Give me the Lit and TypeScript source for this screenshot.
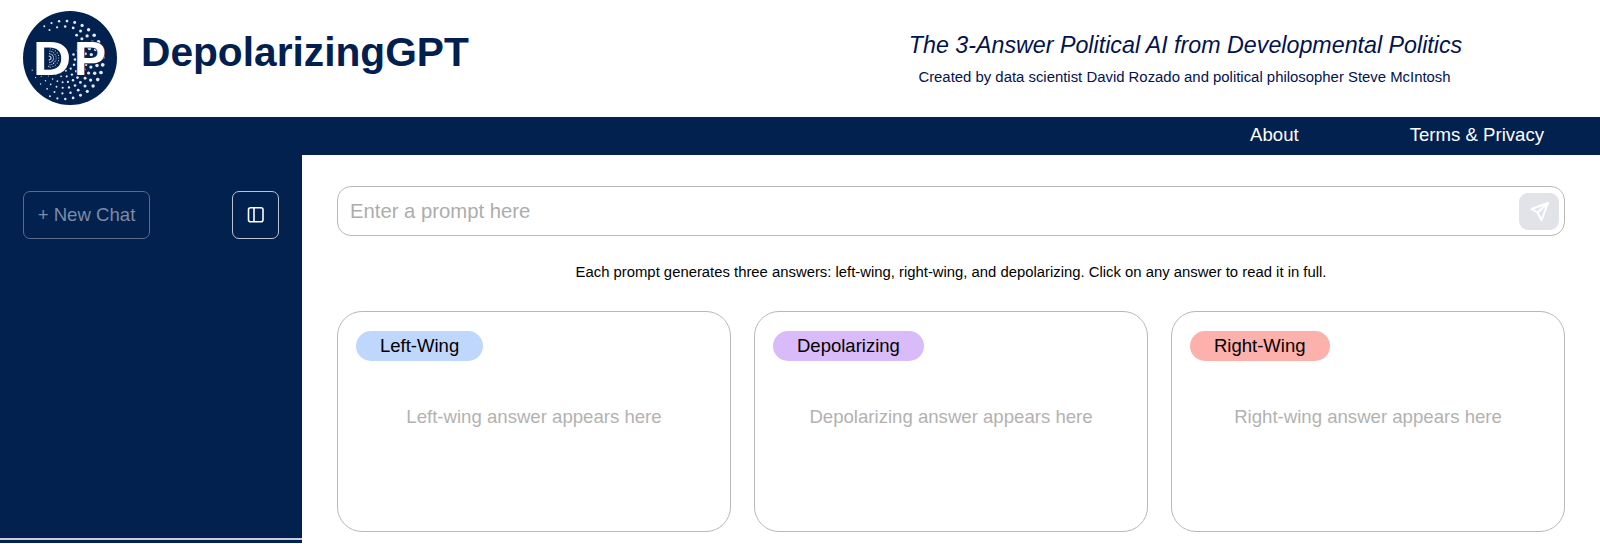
import { LitElement, html, css, svg } from "lit";
import { customElement } from "lit/decorators.js";

function dots() {
  const out: unknown[] = [];
  const cx = 70, cy = 58;
  const ox = 64, oy = 60;
  for (let ring = 0; ring < 6; ring++) {
    const r = 39 - ring * 5.6;
    const n = Math.max(6, Math.round((r * 4.6) / 7.5));
    const start = ring < 2 ? -2.1 : ring < 3 ? -1.1 : -0.6;
    const end = 2.75;
    for (let i = 0; i <= n; i++) {
      const a = start + (i / n) * (end - start) + (ring % 2) * 0.08;
      const x = ox + r * Math.cos(a);
      const y = oy + r * Math.sin(a);
      if (Math.hypot(x - cx, y - cy) > 44) continue;
      const lit = (Math.cos(a + 0.1) + 1) / 2;
      const s = 0.6 + (1.3 - ring * 0.12) * lit;
      out.push(svg`<circle cx=${x.toFixed(1)} cy=${y.toFixed(1)} r=${s.toFixed(2)} fill="#fff" opacity=".9"></circle>`);
    }
  }
  return out;
}

function innerDots() {
  const out: unknown[] = [];
  for (let c = 0; c < 6; c++) {
    for (let i = -5; i <= 5; i++) {
      const a = (i / 5) * 1.45;
      const r = 2 + c * 2.6;
      const x = 49 + r * Math.cos(a);
      const y = 58 + r * Math.sin(a) * 0.95;
      out.push(svg`<circle cx=${x.toFixed(1)} cy=${y.toFixed(1)} r=".6" fill="#c3cddd"></circle>`);
    }
  }
  return out;
}

@customElement("app-root")
export class AppRoot extends LitElement {
  static styles = css`
    :host { display: block; width: 1600px; height: 544px; background: #fff; overflow: hidden;
      font-family: "Liberation Sans", Arial, sans-serif; color: #000; }
    * { box-sizing: border-box; }
    .header { height: 117px; display: flex; align-items: flex-start; }
    .logo { display: block; width: 140px; height: 117px; flex: none; }
    .letter { font-family: "Liberation Sans", sans-serif; font-weight: 700; font-size: 48px; fill: #fff; stroke: #02214f; stroke-width: 1.6px; paint-order: stroke; }
    .brand { width: 600px; margin: 25px 0 0 1px; font-size: 40.7px; line-height: 54px; font-weight: 700; color: #02204f; flex: none; }
    .tag { flex: none; width: 713px; margin-left: 88px; text-align: center; color: #02134f; }
    .tag .t1 { margin-top: 30px; font-size: 23.25px; line-height: 30px; font-style: italic; }
    .tag .t2 { margin-top: 8px; margin-left: -2px; font-size: 14.9px; line-height: 18px; }
    .nav { height: 38px; background: #02214f; display: flex; justify-content: flex-end; align-items: center; color: #fff; font-size: 18.6px; padding: 0 56px 3px 0; gap: 111px; }
    .body { display: flex; height: 389px; align-items: flex-start; }
    .side { width: 302px; height: 388px; flex: none; background: #02214f; display: flex; justify-content: space-between; align-items: flex-start; padding: 36px 23px 0 23px; position: relative; }
    .side::after { content: ""; position: absolute; left: 0; right: 0; bottom: 3px; height: 2px; background: #c9ced8; }
    .new { width: 127px; height: 48px; border: 1px solid #5c6a88; border-radius: 7px; background: none; color: #7e8aa3; font: inherit; font-size: 18.6px; display: flex; align-items: center; justify-content: center; padding: 0; }
    .toggle { width: 47px; height: 48px; border: 1px solid #bcc2cf; border-radius: 7px; display: flex; align-items: center; justify-content: center; }
    .toggle svg { display: block; }
    .main { flex: 1; padding: 31px 35px 0 35px; }
    .input { height: 50px; border: 1px solid #b8b8b8; border-radius: 14px; display: flex; align-items: center; padding: 0 5px 0 12px; }
    .input .ph { flex: 1; color: #adadad; font-size: 20.3px; }
    .send { width: 40px; height: 37px; border-radius: 9px; background: #e1e3e8; display: flex; align-items: center; justify-content: center; }
    .hint { text-align: center; font-size: 14.85px; line-height: 18px; margin-top: 27px; }
    .cards { display: grid; grid-template-columns: repeat(3, 394px); justify-content: space-between; margin-top: 30px; }
    .card { height: 221px; border: 1px solid #b8b8b8; border-radius: 25px; padding: 19px 18px 0 18px; }
    .pill { display: inline-block; height: 30px; line-height: 29px; padding: 0 24px; border-radius: 15px; font-size: 18.5px; }
    .left { background: #bfd7fd; }
    .dep { background: #d9bbf9; }
    .right { background: #fdb1ac; }
    .ans { text-align: center; color: #b2b2b2; font-size: 18.6px; line-height: 22px; margin-top: 45px; }
  `;

  render() {
    return html`
      <div class="header">
        <svg class="logo" viewBox="0 0 140 117" aria-label="DP logo">
          <circle cx="70" cy="58" r="47" fill="#02214f"></circle>
          ${dots()}
          ${innerDots()}
          <text class="letter" transform="translate(33 75) scale(1.1 1)">D</text>
          <text class="letter" transform="translate(74 75)">P</text>
        </svg>
        <div class="brand">DepolarizingGPT</div>
        <div class="tag">
          <div class="t1">The 3-Answer Political AI from Developmental Politics</div>
          <div class="t2">Created by data scientist David Rozado and political philosopher Steve McIntosh</div>
        </div>
      </div>
      <div class="nav"><span>About</span><span>Terms &amp; Privacy</span></div>
      <div class="body">
        <div class="side">
          <button class="new">+ New Chat</button>
          <div class="toggle">
            <svg width="18" height="18" viewBox="0 0 18 18" fill="none" stroke="#fff" stroke-width="1.6">
              <rect x="1.5" y="1.8" width="14.5" height="14" rx="2"></rect>
              <path d="M7 1.8v14"></path>
            </svg>
          </div>
        </div>
        <div class="main">
          <div class="input">
            <div class="ph">Enter a prompt here</div>
            <div class="send">
              <svg width="20" height="20" viewBox="0 0 20 20" fill="none" stroke="#fff" stroke-width="2" stroke-linejoin="round" stroke-linecap="round">
                <path d="M2.5 8 19 2 12.5 19 8.5 11.5z"></path>
                <path d="M8.5 11.5 19 2"></path>
              </svg>
            </div>
          </div>
          <div class="hint">Each prompt generates three answers: left-wing, right-wing, and depolarizing. Click on any answer to read it in full.</div>
          <div class="cards">
            <div class="card"><span class="pill left">Left-Wing</span><div class="ans">Left-wing answer appears here</div></div>
            <div class="card"><span class="pill dep">Depolarizing</span><div class="ans">Depolarizing answer appears here</div></div>
            <div class="card"><span class="pill right">Right-Wing</span><div class="ans">Right-wing answer appears here</div></div>
          </div>
        </div>
      </div>
    `;
  }
}
